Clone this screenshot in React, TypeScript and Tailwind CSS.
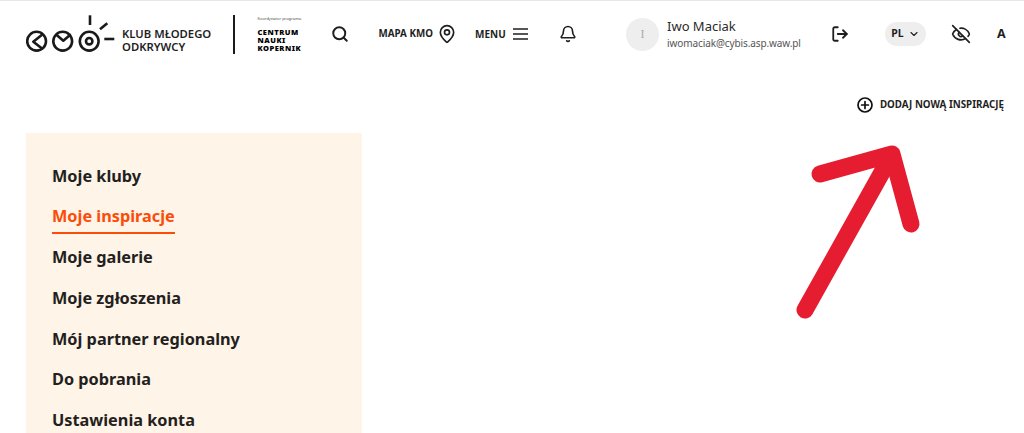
import React from 'react';
import { Search, MapPin, Bell, LogOut, ChevronDown, EyeOff } from 'lucide-react';

const menuItems = [
  { label: 'Moje kluby' },
  { label: 'Moje inspiracje', active: true },
  { label: 'Moje galerie' },
  { label: 'Moje zgłoszenia' },
  { label: 'Mój partner regionalny' },
  { label: 'Do pobrania' },
  { label: 'Ustawienia konta' },
];

const Logo = () => (
  <svg width="90" height="40" viewBox="0 0 90 40" fill="none" stroke="#1a1a1a" strokeWidth="2.6" strokeLinecap="round" strokeLinejoin="round" aria-hidden="true">
    <circle cx="10.6" cy="27.2" r="9.4" />
    <path d="M15.7 21 L7.3 27.7 L15.7 34.3" />
    <circle cx="36.7" cy="27.2" r="9.4" />
    <path d="M30.7 21 L37.3 26.7 L44 21" />
    <circle cx="63.2" cy="27.2" r="9.4" />
    <circle cx="63.2" cy="27.2" r="3.2" />
    <path d="M64 1.3 V11" strokeLinecap="butt" />
    <path d="M74 15.3 L81.3 9.3" strokeLinecap="butt" />
    <path d="M78.3 25 H88.3" strokeLinecap="butt" />
  </svg>
);

const Arrow = () => (
  <svg className="absolute left-[780px] top-[130px]" width="160" height="200" viewBox="780 130 160 200" fill="none" stroke="#e61c31" strokeWidth="17" strokeLinecap="round" strokeLinejoin="round" aria-hidden="true">
    <path d="M805 310 L890 158" />
    <path d="M820 174 L892 154 L911 224" />
  </svg>
);

export default function App() {
  return (
    <div className="relative h-[433px] w-[1024px] overflow-hidden bg-white font-['Noto_Sans','Open_Sans',sans-serif] text-[#1f1f1f]">
      <header className="flex h-[67px] items-center border-t border-t-[#e8e8e8] pl-[26px]">
        <Logo />
        <div className="ml-[6px] w-[100px] pt-[11px] text-[11.3px] font-semibold leading-[13px]">
          <div className="whitespace-nowrap">KLUB MŁODEGO</div>
          <div>ODKRYWCY</div>
        </div>
        <div className="ml-[11px] h-[39px] w-[1.5px] bg-[#1a1a1a]" />
        <div className="ml-[23px] w-[44px] self-start pt-[15px]">
          <div className="whitespace-nowrap text-[4px] leading-[5px] text-[#444]">Koordynator programu</div>
          <div className="mt-[7px] text-[7.5px] font-black leading-[8px] tracking-[0.5px] text-black">
            <div>CENTRUM</div>
            <div>NAUKI</div>
            <div className="whitespace-nowrap">KOPERNIK</div>
          </div>
        </div>
        <Search className="ml-[29.5px] h-[18px] w-[18px]" strokeWidth={2.6} />
        <span className="ml-[29.5px] w-[54px] whitespace-nowrap text-[9.8px] font-bold">MAPA KMO</span>
        <MapPin className="ml-[4.5px] h-[20px] w-[20px]" strokeWidth={2} />
        <span className="ml-[18px] w-[30px] text-[10px] font-bold">MENU</span>
        <svg className="ml-[8px] mr-[3px]" width="15" height="12" viewBox="0 0 15 12" fill="none" stroke="#1f1f1f" strokeWidth="1.6" aria-hidden="true">
          <path d="M0 1 H15 M0 6 H15 M0 11 H15" />
        </svg>
        <Bell className="ml-[27.5px] h-[18px] w-[18px]" strokeWidth={2.2} />
        <div className="ml-[49.5px] flex h-[33px] w-[33px] items-center justify-center rounded-full bg-[#eeeeee] font-['Liberation_Serif',serif] text-[12px] text-[#aaaaaa]">I</div>
        <div className="ml-[8px] w-[150px]">
          <div className="text-[13px] leading-[19px] text-[#2b2b2b]">Iwo Maciak</div>
          <div className="text-[10px] leading-[15px] tracking-[-0.1px] text-[#555]">iwomaciak@cybis.asp.waw.pl</div>
        </div>
        <LogOut className="ml-[13.5px] h-[18px] w-[18px]" strokeWidth={2.4} />
        <div className="ml-[36.5px] flex h-[24px] w-[41px] items-center justify-center gap-[4px] rounded-full bg-[#eeeeee] text-[10.5px] font-bold">
          PL
          <ChevronDown className="h-[12px] w-[12px]" strokeWidth={2.2} />
        </div>
        <EyeOff className="ml-[25px] h-[20px] w-[20px]" strokeWidth={2} />
        <span className="ml-[26px] text-[12.5px] font-bold">A</span>
      </header>

      <div className="flex h-[66px] items-start justify-end pr-[20px] pt-[30px]">
        <div className="flex h-[16px] items-center gap-[7px]">
          <svg width="16" height="16" viewBox="0 0 16 16" fill="none" stroke="#111" strokeWidth="1.7" strokeLinecap="round" aria-hidden="true">
            <circle cx="8" cy="8" r="7" />
            <path d="M8 4.6 V11.4 M4.6 8 H11.4" />
          </svg>
          <span className="whitespace-nowrap text-[9.8px] font-bold">DODAJ NOWĄ INSPIRACJĘ</span>
        </div>
      </div>

      <aside className="ml-[26px] h-[300px] w-[336px] bg-[#fff4e8] pl-[26px] pt-[19.5px]">
        <ul>
          {menuItems.map((item) => (
            <li key={item.label} className="h-[40.75px]">
              <span className={`inline-block h-[41px] text-[16.3px] font-bold leading-[47px] ${item.active ? 'border-b-2 border-b-[#fa4d09] text-[#fa4d09]' : 'text-[#231f20]'}`}>
                {item.label}
              </span>
            </li>
          ))}
        </ul>
      </aside>

      <Arrow />
    </div>
  );
}
